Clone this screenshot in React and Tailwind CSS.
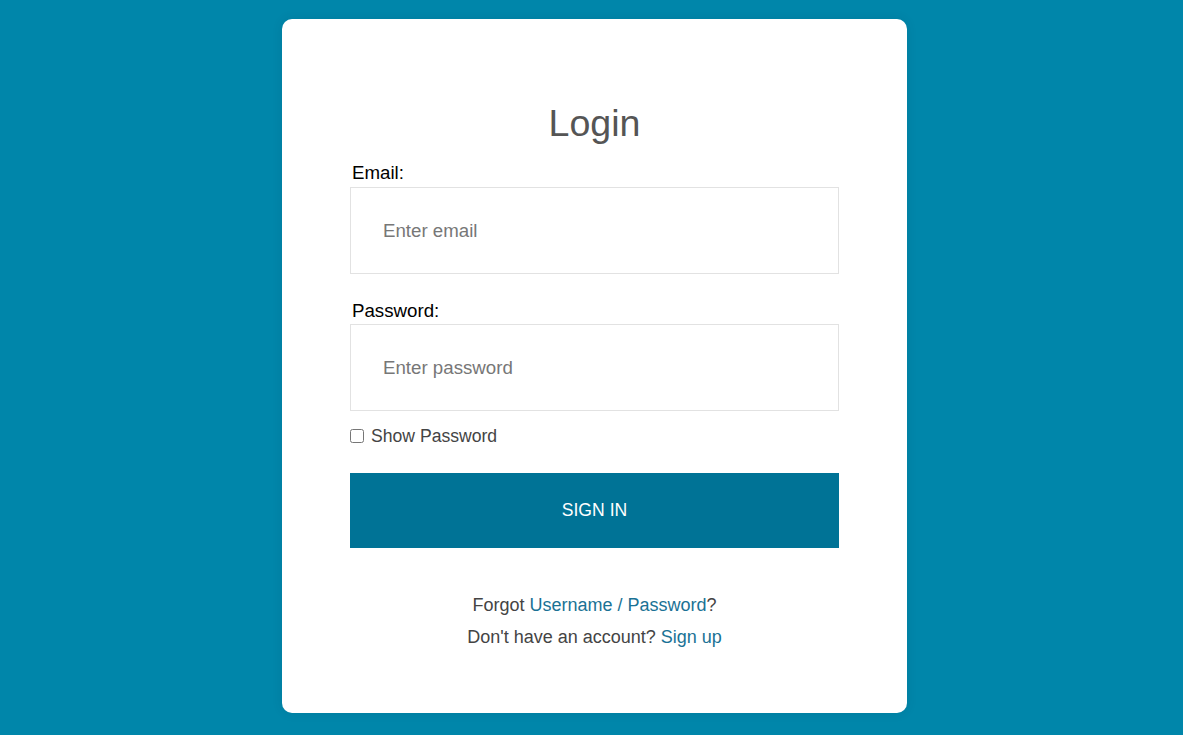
import { useState } from "react";

function App() {
  const [showPassword, setShowPassword] = useState(false);

  return (
    <div
      className="min-h-screen bg-[#0086aa] flex justify-center pt-[19px] pb-[22px] pl-[6px]"
      style={{ fontFamily: '"Liberation Sans", Arial, sans-serif' }}
    >
      <div className="w-[625px] bg-white rounded-[10px] px-[68px] pt-[83px] pb-[60px] shadow-[0_0_12px_rgba(0,0,0,0.08)]">
        <h1 className="text-center text-[37.6px] leading-[42px] text-[#555555] mb-[18px]">
          Login
        </h1>
        <form onSubmit={(e) => e.preventDefault()}>
          <label className="block text-[18.7px] leading-[22px] text-black pl-[2px] mb-[3px]">
            Email:
          </label>
          <input
            type="email"
            placeholder="Enter email"
            className="block w-full h-[87px] border border-[#e2e2e2] px-[32px] text-[18.7px] text-[#333] placeholder:text-[#777777] outline-none"
          />
          <label className="block text-[18.7px] leading-[22px] text-black pl-[2px] mt-[26px] mb-[2px]">
            Password:
          </label>
          <input
            type={showPassword ? "text" : "password"}
            placeholder="Enter password"
            className="block w-full h-[87px] border border-[#e2e2e2] px-[32px] text-[18.7px] text-[#333] placeholder:text-[#777777] outline-none"
          />
          <label className="flex items-center mt-[15px] text-[17.6px] leading-[20px] text-[#444444]">
            <input
              type="checkbox"
              checked={showPassword}
              onChange={(e) => setShowPassword(e.target.checked)}
              className="w-[14px] h-[14px] m-0 mr-[7px]"
            />
            Show Password
          </label>
          <button
            type="submit"
            className="block w-full h-[75px] mt-[27px] bg-[#007396] text-white text-[17.6px] uppercase"
          >
            Sign In
          </button>
        </form>
        <div className="mt-[41px] text-center text-[18px] leading-[32px] text-[#444444]">
          <p>
            Forgot{" "}
            <a href="#" className="text-[#1a7295]">
              Username / Password
            </a>
            ?
          </p>
          <p>
            Don't have an account?{" "}
            <a href="#" className="text-[#1a7295]">
              Sign up
            </a>
          </p>
        </div>
      </div>
    </div>
  );
}

export default App;
